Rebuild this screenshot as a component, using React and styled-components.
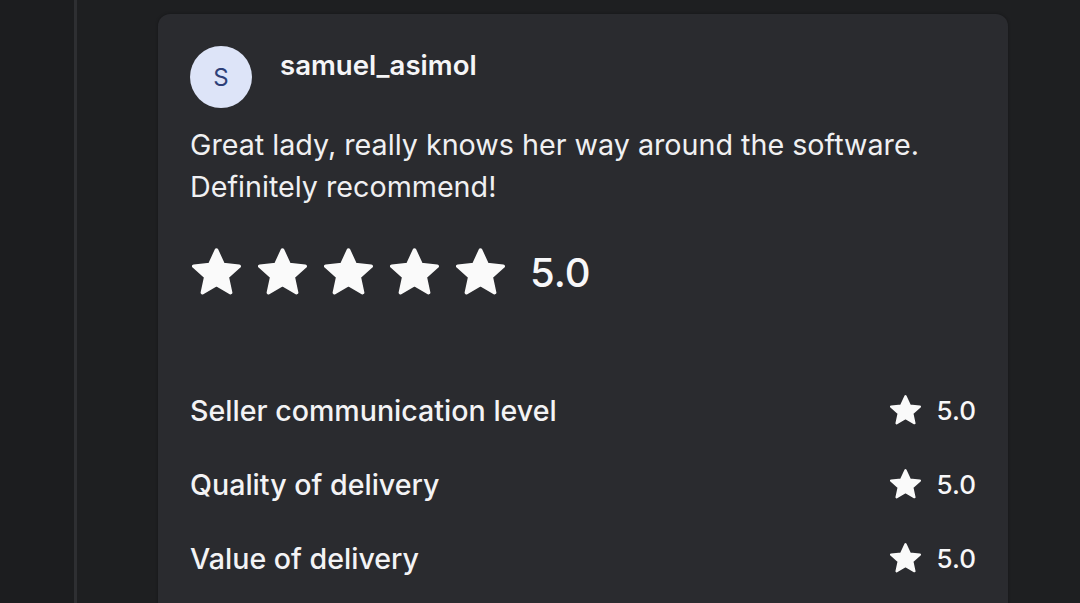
import React from 'react'
import styled, { createGlobalStyle } from 'styled-components'

const GlobalStyle = createGlobalStyle`
    html, body {
        margin: 0;
        padding: 0;
        background: #1e1f21;
        font-family: Inter, "Liberation Sans", Arial, sans-serif;
        -webkit-font-smoothing: antialiased;
    }
`;

const Page = styled.div`
    display: flex;
    width: 1080px;
    height: 603px;
    overflow: hidden;
    background: #1e1f21;
`;

const Sidebar = styled.div`
    width: 74px;
    flex-shrink: 0;
    background: #1c1d1f;
    border-right: 3px solid #2e2f32;
`;

const Main = styled.div`
    flex: 1;
    padding: 14px 0 0 81px;
`;

const Card = styled.div`
    width: 850px;
    box-sizing: border-box;
    min-height: 700px;
    padding: 32px 32px;
    background: #2a2b2f;
    border-radius: 12px;
    box-shadow: 0 0 3px rgba(0, 0, 0, 0.35);
    color: #f5f5f7;
`;

const Header = styled.div`
    display: flex;
    align-items: flex-start;
    gap: 28px;
`;

const Avatar = styled.div`
    width: 62px;
    height: 62px;
    border-radius: 50%;
    background: #dde4f8;
    color: #2d3f78;
    display: flex;
    align-items: center;
    justify-content: center;
    font-size: 24px;
    font-weight: 400;
`;

const Name = styled.div`
    margin-top: 2px;
    font-size: 27.6px;
    font-weight: 600;
    color: #f5f5f7;
`;

const Comment = styled.p`
    margin: 16px 0 0;
    font-size: 28.7px;
    line-height: 42px;
    color: #f0f0f2;
`;

const StarsRow = styled.div`
    display: flex;
    align-items: center;
    gap: 17px;
    margin-top: 39px;
    padding-left: 2px;
    height: 50px;
`;

const Score = styled.span`
    margin-left: ${({ big }) => (big ? '8px' : '0')};
    font-size: ${({ big }) => (big ? '40px' : '26px')};
    font-weight: 500;
    color: #f7f7f9;
`;

const Details = styled.div`
    margin-top: 76px;
`;

const DetailRow = styled.div`
    display: flex;
    align-items: center;
    justify-content: space-between;
    height: 74px;
`;

const Label = styled.span`
    font-size: 28.6px;
    font-weight: 500;
    color: #f3f3f5;
`;

const RowScore = styled.div`
    display: flex;
    align-items: center;
    gap: 16px;
`;

const Star = ({ size }) => (
    <svg width={size} height={size} viewBox="2.6 2.4 18.8 18.8">
        <path
            d="M12 3.2l2.6 5.6 6.1.6-4.6 4.1 1.3 6L12 16.4l-5.4 3.1 1.3-6-4.6-4.1 6.1-.6z"
            fill="#fafafa"
            stroke="#fafafa"
            strokeWidth="1.4"
            strokeLinejoin="round"
        />
    </svg>
);

const details = [
    { label: 'Seller communication level', score: '5.0' },
    { label: 'Quality of delivery', score: '5.0' },
    { label: 'Value of delivery', score: '5.0' },
];

const App = () => {
    return (
        <Page>
            <GlobalStyle />
            <Sidebar />
            <Main>
                <Card>
                    <Header>
                        <Avatar>S</Avatar>
                        <Name>samuel_asimol</Name>
                    </Header>

                    <Comment>
                        Great lady, really knows her way around the software.
                        <br />
                        Definitely recommend!
                    </Comment>

                    <StarsRow>
                        {[0, 1, 2, 3, 4].map((i) => (
                            <Star key={i} size={49} />
                        ))}
                        <Score big>5.0</Score>
                    </StarsRow>

                    <Details>
                        {details.map((item) => (
                            <DetailRow key={item.label}>
                                <Label>{item.label}</Label>
                                <RowScore>
                                    <Star size={31} />
                                    <Score>{item.score}</Score>
                                </RowScore>
                            </DetailRow>
                        ))}
                    </Details>
                </Card>
            </Main>
        </Page>
    )
}

export default App
